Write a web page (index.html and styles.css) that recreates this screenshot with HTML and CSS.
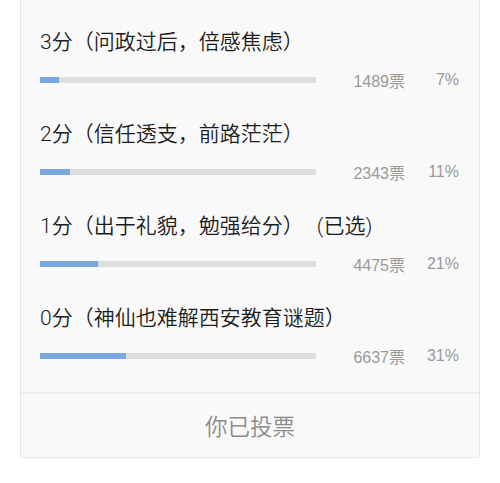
FILE: index.html
```html
<!DOCTYPE html>
<html lang="zh-CN">
<head>
<meta charset="utf-8">
<link rel="stylesheet" href="styles.css">
</head>
<body>
<div class="card">
  <ul class="options">
    <li class="option">
      <div class="title">3分（问政过后，倍感焦虑）</div>
      <div class="meter">
        <div class="track"><div class="fill" style="width:7%"></div></div>
        <span class="votes">1489票</span>
        <span class="pct">7%</span>
      </div>
    </li>
    <li class="option">
      <div class="title">2分（信任透支，前路茫茫）</div>
      <div class="meter">
        <div class="track"><div class="fill" style="width:11%"></div></div>
        <span class="votes">2343票</span>
        <span class="pct">11%</span>
      </div>
    </li>
    <li class="option">
      <div class="title">1分（出于礼貌，勉强给分） <span class="picked">(已选)</span></div>
      <div class="meter">
        <div class="track"><div class="fill" style="width:21%"></div></div>
        <span class="votes">4475票</span>
        <span class="pct">21%</span>
      </div>
    </li>
    <li class="option">
      <div class="title">0分（神仙也难解西安教育谜题）</div>
      <div class="meter">
        <div class="track"><div class="fill" style="width:31%"></div></div>
        <span class="votes">6637票</span>
        <span class="pct">31%</span>
      </div>
    </li>
  </ul>
  <div class="footer">你已投票</div>
</div>
</body>
</html>
```
FILE: styles.css
```css
html, body {
  margin: 0;
  padding: 0;
  background: #ffffff;
}
body {
  font-family: "Liberation Sans", "Noto Sans CJK SC", sans-serif;
  color: #222222;
}
.card {
  margin: 0 20px 0 20px;
  width: 460px;
  background: #f9f9fa;
  border: 1px solid #e6e6e6;
  border-top: none;
  border-radius: 0 0 4px 4px;
  box-sizing: border-box;
  height: 458px;
  display: flex;
  flex-direction: column;
}
.options {
  list-style: none;
  margin: 0;
  padding: 28px 19px 26px 19px;
  display: flex;
  flex-direction: column;
  gap: 30px;
  border-bottom: 2px solid #eeeeee;
}
.option {
  display: flex;
  flex-direction: column;
  gap: 14px;
}
.title {
  font-family: Roboto, "Noto Sans CJK SC", sans-serif;
  font-size: 21px;
  line-height: 28px;
  height: 28px;
  white-space: nowrap;
  color: #1c1c1c;
  font-weight: 350;
}
.picked {
  margin-left: 8px;
}
.meter {
  display: flex;
  align-items: center;
  height: 20px;
}
.track {
  width: 276px;
  height: 6px;
  background: #dddddd;
  flex: none;
}
.fill {
  height: 100%;
  background: #79a8de;
}
.votes {
  width: 89px;
  text-align: right;
  font-size: 16px;
  color: #999999;
}
.pct {
  width: 54px;
  text-align: right;
  font-size: 16px;
  color: #999999;
}
.footer {
  flex: 1;
  display: flex;
  align-items: center;
  justify-content: center;
  font-size: 22.5px;
  font-weight: 350;
  color: #8a8a8a;
  padding-bottom: 2px;
}
```
